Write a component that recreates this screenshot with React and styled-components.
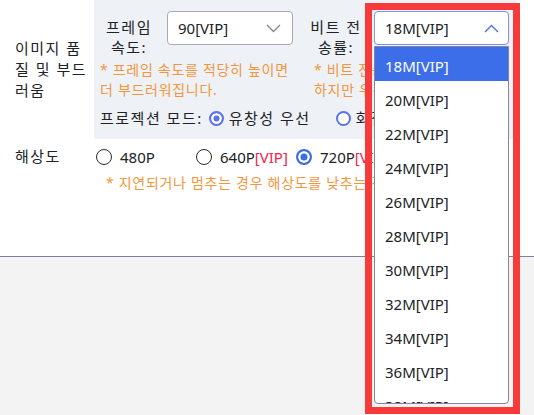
import styled, { createGlobalStyle } from "styled-components"

const bitrates = ["18M", "20M", "22M", "24M", "26M", "28M", "30M", "32M", "34M", "36M", "38M"]

const GlobalStyle = createGlobalStyle`
    body {
        margin: 0;
        background: #f3f3f4;
        font-family: "Noto Sans", "Noto Sans CJK KR", sans-serif;
        color: #202226;
    }
`

function Chevron({ up }) {
    return (
        <svg width="15" height="9" viewBox="0 0 15 9" fill="none">
            <polyline
                points={up ? "1,8 7.5,1.5 14,8" : "1,1 7.5,7.5 14,1"}
                stroke={up ? "#4a6fe3" : "#8a8a90"}
                strokeWidth="1.4"
            />
        </svg>
    )
}

export default function App() {
    return (
        <Page>
            <GlobalStyle />
            <Top>
                <SettingRow>
                    <RowLabel>이미지 품질 및 부드러움</RowLabel>
                    <Panel>
                        <Columns>
                            <Column>
                                <Field>
                                    <FieldLabel>프레임 속도:</FieldLabel>
                                    <Select width={126}>
                                        90[VIP]
                                        <Chevron />
                                    </Select>
                                </Field>
                                <Hint indent={2}>
                                    * 프레임 속도를 적당히 높이면<br />더 부드러워집니다.
                                </Hint>
                            </Column>
                            <Column>
                                <Field>
                                    <FieldLabel>비트 전송률:</FieldLabel>
                                    <SelectWrap>
                                        <Select width={135} open>
                                            18M[VIP]
                                            <Chevron up />
                                        </Select>
                                        <Menu>
                                            {bitrates.map((b, i) => (
                                                <Option key={b} active={i === 0}>{b}[VIP]</Option>
                                            ))}
                                        </Menu>
                                        <Highlight />
                                    </SelectWrap>
                                </Field>
                                <Hint indent={9}>
                                    * 비트 전송률을 높이면<br />하지만 우선 확인하세요.
                                </Hint>
                            </Column>
                        </Columns>
                        <ModeRow>
                            프로젝션 모드:
                            <Choice>
                                <Ring checked />유창성 우선
                            </Choice>
                            <Choice>
                                <Ring />화질 우선
                            </Choice>
                        </ModeRow>
                    </Panel>
                </SettingRow>
                <ResolutionRow>
                    <RowLabel>해상도</RowLabel>
                    <Options>
                        <ResOption><Radio />480P</ResOption>
                        <ResOption><Radio />640P<Vip>[VIP]</Vip></ResOption>
                        <ResOption><Radio checked />720P<Vip>[VIP]</Vip></ResOption>
                    </Options>
                </ResolutionRow>
                <FootHint>* 지연되거나 멈추는 경우 해상도를 낮추는 것이 좋습니다.</FootHint>
            </Top>
            <Bottom />
        </Page>
    )
}

const Page = styled.div`
    min-height: 100vh;
    display: flex;
    flex-direction: column;
`

const Top = styled.div`
    height: 256px;
    flex-shrink: 0;
    background: #ffffff;
    border-bottom: 1px solid #7f7f98;
    font-size: 15px;
`

const Bottom = styled.div`
    flex: 1;
    background: #f3f3f4;
`

const SettingRow = styled.div`
    display: flex;
    align-items: center;
`

const RowLabel = styled.div`
    width: 94px;
    flex-shrink: 0;
    box-sizing: border-box;
    padding-left: 15px;
    padding-right: 3px;
    line-height: 21px;
    letter-spacing: 1.5px;
`

const Panel = styled.div`
    width: 422px;
    box-sizing: border-box;
    background: #eef1f5;
    padding: 11px 7px 11px 4px;
    display: flex;
    flex-direction: column;
    gap: 8px;
`

const Columns = styled.div`
    display: grid;
    grid-template-columns: 195px 204px;
    column-gap: 12px;
`

const Column = styled.div`
    display: flex;
    flex-direction: column;
    gap: 3px;
`

const Field = styled.div`
    display: flex;
    align-items: flex-start;
    gap: 7px;
`

const FieldLabel = styled.div`
    width: 62px;
    flex-shrink: 0;
    text-align: center;
    line-height: 20px;
    padding-top: 6px;
    letter-spacing: 1.5px;
`

const SelectWrap = styled.div`
    position: relative;
`

const Select = styled.div`
    width: ${p => p.width}px;
    height: 34px;
    box-sizing: border-box;
    display: flex;
    align-items: center;
    justify-content: space-between;
    padding: 0 ${p => (p.open ? 9 : 11)}px 0 10px;
    background: #ffffff;
    border: 1px solid ${p => (p.open ? "#7c93ec" : "#a9a9b2")};
    border-radius: 4px;
    font-size: 15px;
`

const Menu = styled.div`
    position: absolute;
    top: 35px;
    left: 0;
    width: 135px;
    height: 358px;
    box-sizing: border-box;
    background: #ffffff;
    border: 1px solid #85859b;
    border-radius: 0 0 4px 4px;
    overflow: hidden;
    z-index: 2;
`

const Option = styled.div`
    height: 34px;
    box-sizing: border-box;
    padding: 3px 0 0 10px;
    line-height: 32px;
    font-size: 15px;
    background: ${p => (p.active ? "#3b6ee8" : "transparent")};
    color: ${p => (p.active ? "#ffffff" : "#202226")};
`

const Highlight = styled.div`
    position: absolute;
    top: -8px;
    left: -9px;
    width: 155px;
    height: 411px;
    box-sizing: border-box;
    border: 7px solid #f93a3b;
    pointer-events: none;
    z-index: 3;
`

const Hint = styled.div`
    padding-left: ${p => p.indent}px;
    font-size: 14px;
    line-height: 20px;
    letter-spacing: 0.7px;
    color: #f2963e;
    white-space: nowrap;
`

const ModeRow = styled.div`
    display: flex;
    align-items: center;
    padding-left: 2px;
    line-height: 20px;
    gap: 6px;
    letter-spacing: 1.5px;
    white-space: nowrap;
`

const Choice = styled.span`
    display: inline-flex;
    align-items: center;
    gap: 5px;
    margin-right: 19px;
`

const Ring = styled.span`
    width: 15px;
    height: 15px;
    box-sizing: border-box;
    border-radius: 50%;
    border: 2px solid #5a72f0;
    background: ${p => (p.checked ? "#5a72f0" : "#ffffff")};
    box-shadow: ${p => (p.checked ? "inset 0 0 0 2.5px #ffffff" : "none")};
`

const ResolutionRow = styled.div`
    display: flex;
    align-items: center;
    margin-top: 7px;
    line-height: 20px;
`

const Options = styled.div`
    display: flex;
    padding-left: 2px;
`

const ResOption = styled.span`
    width: 100px;
    display: inline-flex;
    align-items: center;
    white-space: nowrap;
`

const Radio = styled.span`
    width: 16px;
    height: 16px;
    box-sizing: border-box;
    margin-right: 8px;
    border-radius: 50%;
    border: ${p => (p.checked ? "2px solid #3a6ee6" : "1px solid #2a2a2a")};
    background: ${p => (p.checked ? "#3a6ee6" : "#ffffff")};
    box-shadow: ${p => (p.checked ? "inset 0 0 0 2.5px #ffffff" : "none")};
`

const Vip = styled.span`
    color: #f5224b;
`

const FootHint = styled.div`
    margin-top: 6px;
    padding-left: 106px;
    font-size: 14px;
    line-height: 20px;
    letter-spacing: 0.7px;
    color: #f2963e;
    white-space: nowrap;
`
